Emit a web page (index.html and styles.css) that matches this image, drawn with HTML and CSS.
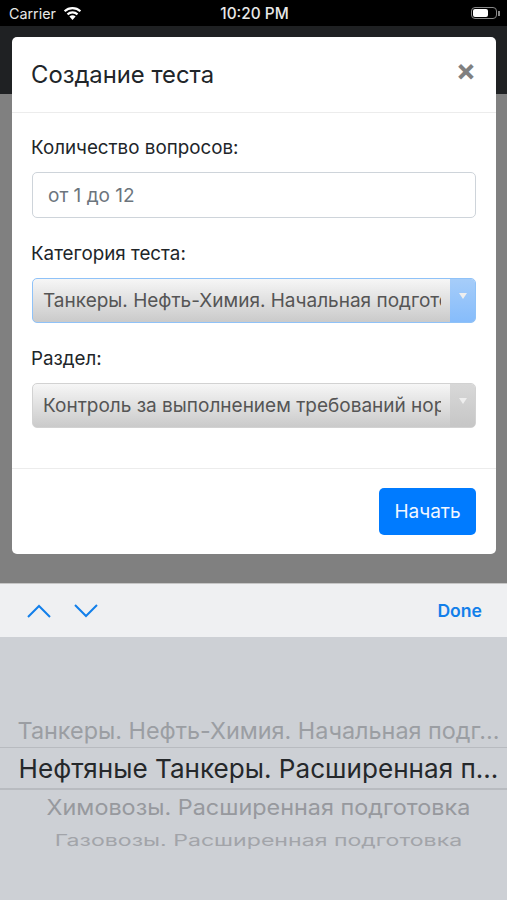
FILE: index.html
```html
<!DOCTYPE html>
<html lang="ru">
<head>
  <meta charset="UTF-8" />
  <meta name="viewport" content="width=device-width, initial-scale=1" />
  <title>Создание теста</title>
  <link rel="stylesheet" href="styles.css">
</head>
<body>
  <div class="screen">
    <div class="status-bar">
      <div class="status-left">
        <span>Carrier</span>
        <svg class="wifi" width="19" height="14" viewBox="0 0 19 14">
          <path d="M9.5 14 L6.4 10.6 A4.6 4.6 0 0 1 12.6 10.6 Z" fill="#fff"/>
          <path d="M4.5 8.4 A7.4 7.4 0 0 1 14.5 8.4" fill="none" stroke="#fff" stroke-width="2.2"/>
          <path d="M1.6 5.2 A11.6 11.6 0 0 1 17.4 5.2" fill="none" stroke="#fff" stroke-width="2.2"/>
        </svg>
      </div>
      <span class="status-time">10:20 PM</span>
      <div class="battery">
        <div class="battery-body"><div class="battery-level"></div></div>
        <div class="battery-cap"></div>
      </div>
    </div>
    <div class="navbar"></div>
    <div class="backdrop"></div>

    <div class="modal">
      <div class="modal-header">
        <h1>Создание теста</h1>
        <span class="close">×</span>
      </div>
      <div class="modal-body">
        <label>Количество вопросов:</label>
        <div class="input">от 1 до 12</div>
        <label>Категория теста:</label>
        <div class="select select-active">
          <span class="select-text">Танкеры. Нефть-Химия. Начальная подготовка</span>
          <span class="select-arrow"></span>
        </div>
        <label>Раздел:</label>
        <div class="select">
          <span class="select-text">Контроль за выполнением требований норм</span>
          <span class="select-arrow"></span>
        </div>
      </div>
      <div class="modal-footer">
        <button type="button">Начать</button>
      </div>
    </div>

    <div class="toolbar">
      <div class="toolbar-arrows">
        <svg width="24" height="14" viewBox="0 0 24 14"><path d="M1 13 L12 2 L23 13" fill="none" stroke="#127fea" stroke-width="2"/></svg>
        <svg width="24" height="14" viewBox="0 0 24 14"><path d="M1 1 L12 12 L23 1" fill="none" stroke="#127fea" stroke-width="2"/></svg>
      </div>
      <span class="done">Done</span>
    </div>

    <div class="picker">
      <div class="picker-row row-prev"><span>Танкеры. Нефть-Химия. Начальная подг...</span></div>
      <div class="picker-row row-current"><span>Нефтяные Танкеры. Расширенная п...</span></div>
      <div class="picker-row row-next"><span>Химовозы. Расширенная подготовка</span></div>
      <div class="picker-row row-last"><span>Газовозы. Расширенная подготовка</span></div>
    </div>
  </div>
</body>
</html>
```

FILE: styles.css
```css
* {
  box-sizing: border-box;
}
html, body {
  margin: 0;
  padding: 0;
}
body {
  font-family: Inter, "Noto Sans", sans-serif;
  color: #212529;
}
.screen {
  position: relative;
  width: 507px;
  height: 900px;
  overflow: hidden;
  display: flex;
  flex-direction: column;
  background: #808080;
}
.status-bar {
  height: 26px;
  background: #000;
  color: #e8e8e8;
  font-size: 14.3px;
  display: flex;
  align-items: center;
  justify-content: space-between;
  padding: 0 7px 0 9px;
}
.status-left {
  display: flex;
  align-items: center;
  gap: 7px;
  flex: 1;
}
.status-time {
  font-size: 15.4px;
  font-weight: 500;
}
.battery {
  display: flex;
  align-items: center;
  justify-content: flex-end;
  flex: 1;
  gap: 1px;
}
.battery-body {
  width: 26px;
  height: 12px;
  border: 1px solid #888;
  border-radius: 4px;
  padding: 1px;
}
.battery-level {
  width: 15px;
  height: 8px;
  background: #fff;
  border-radius: 2px;
}
.battery-cap {
  width: 2px;
  height: 5px;
  background: #888;
}
.navbar {
  height: 68px;
  background: #1f2123;
}
.backdrop {
  height: 489px;
  background: #808080;
}
.modal {
  position: absolute;
  left: 12px;
  top: 37px;
  width: 484px;
  height: 517px;
  background: #fff;
  border-radius: 5px;
  display: flex;
  flex-direction: column;
}
.modal-header {
  height: 76px;
  border-bottom: 1px solid #ececec;
  display: flex;
  align-items: center;
  justify-content: space-between;
  padding: 0 20px;
}
.modal-header h1 {
  margin: 0 0 0 -1px;
  font-size: 23.8px;
  font-weight: 400;
}
.close {
  font-size: 30px;
  font-weight: 700;
  color: #808080;
  line-height: 1;
  margin-top: -9px;
}
.modal-body {
  flex: 1;
  padding: 23px 20px 0;
}
.modal-body label {
  display: block;
  font-size: 18.8px;
  line-height: 24px;
  margin: 0 0 12px -1px;
}
.input {
  height: 46px;
  border: 1px solid #ced4da;
  border-radius: 5px;
  padding: 0 15px;
  display: flex;
  align-items: center;
  font-size: 19px;
  color: #6c757d;
  margin-bottom: 24px;
}
.select {
  height: 45px;
  border: 1px solid #d2d2d2;
  border-radius: 5px;
  background: linear-gradient(#f6f6f6, #cacaca);
  display: flex;
  align-items: center;
  margin-bottom: 24px;
  overflow: hidden;
}
.select-text {
  flex: 1;
  min-width: 0;
  margin: 0 9px 0 10px;
  font-size: 19px;
  color: #555;
  white-space: nowrap;
  overflow: hidden;
}
.select-arrow {
  width: 25px;
  height: 100%;
  background: linear-gradient(#d8d8d8, #c6c6c6);
  display: flex;
  justify-content: center;
  padding-top: 14px;
}
.select-arrow::after {
  content: "";
  width: 0;
  height: 0;
  border-left: 4px solid transparent;
  border-right: 4px solid transparent;
  border-top: 6px solid #eee;
}
.select-active {
  border-color: #8fc2f8;
}
.select-active .select-arrow {
  background: linear-gradient(#a6cdf9, #86bcfb);
}
.modal-footer {
  height: 86px;
  border-top: 1px solid #ececec;
  display: flex;
  justify-content: flex-end;
  align-items: center;
  padding: 0 20px;
}
.modal-footer button {
  width: 97px;
  height: 47px;
  border: none;
  border-radius: 5px;
  background: #007bff;
  color: #f2f7ff;
  font-family: inherit;
  font-size: 19px;
}
.toolbar {
  height: 54px;
  background: #eff0f2;
  border-top: 1px solid #c6c6c6;
  display: flex;
  align-items: center;
  justify-content: space-between;
  padding: 0 25px 0 27px;
}
.toolbar-arrows {
  display: flex;
  gap: 23px;
}
.done {
  color: #127fea;
  font-size: 17.6px;
  font-weight: 600;
}
.picker {
  flex: 1;
  background: #cdd0d5;
  padding-top: 77px;
  display: flex;
  flex-direction: column;
}
.picker-row {
  white-space: nowrap;
  display: flex;
  justify-content: center;
  width: 100%;
  padding-left: 10px;
}
.row-prev {
  height: 34px;
  font-size: 23.4px;
  line-height: 34px;
  color: #9b9ea3;
  border-bottom: 1px solid #b8bbc0;
}
.row-current {
  height: 42px;
  font-size: 26.1px;
  line-height: 42px;
  color: #25282b;
  border-bottom: 2px solid #b8bbc0;
}
.row-next {
  height: 36px;
  font-size: 23.4px;
  line-height: 36px;
  color: #97999e;
}
.row-next span {
  transform: scaleY(0.9);
}
.row-last {
  font-size: 23.1px;
  line-height: 30px;
  color: #a2a4a9;
}
.row-last span {
  transform: scaleY(0.68);
}
```
